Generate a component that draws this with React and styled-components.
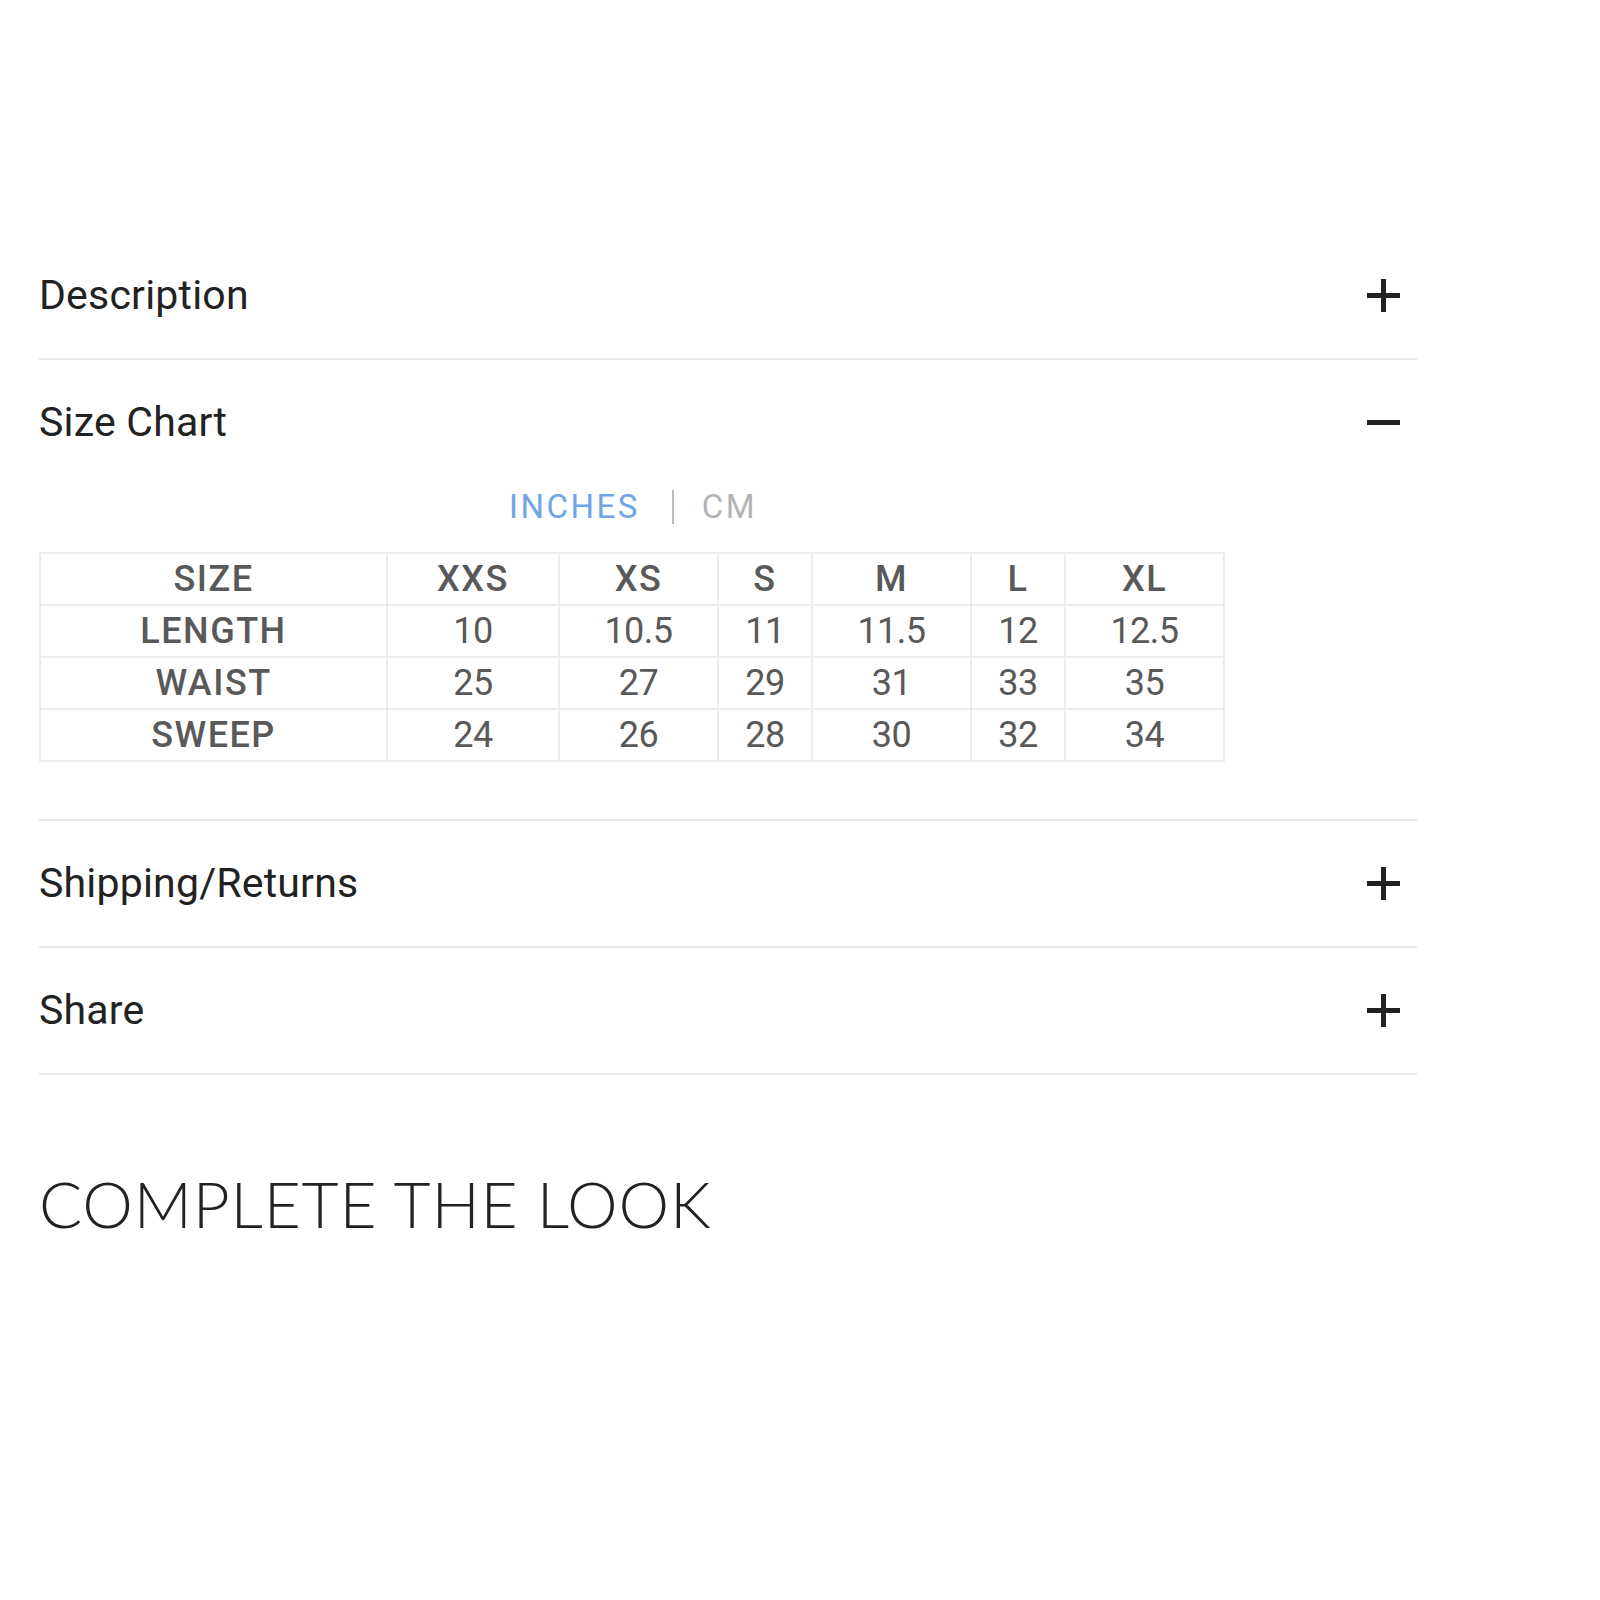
import React, { useState } from "react";
import styled, { createGlobalStyle } from "styled-components";

const Global = createGlobalStyle`
  html, body { margin: 0; padding: 0; background: #ffffff; }
  body { font-family: Roboto, "Liberation Sans", Arial, sans-serif; color: #222; }
`;

const Page = styled.div`
  padding: 233px 0 200px 39px;
`;

const Accordion = styled.div`
  width: 1378px;
`;

const Item = styled.section`
  border-bottom: 2px solid #e7e7e7;
`;

const Header = styled.button`
  all: unset;
  box-sizing: border-box;
  width: 100%;
  height: 125px;
  display: flex;
  align-items: center;
  justify-content: space-between;
  padding-right: 17px;
  cursor: pointer;
`;

const Title = styled.span`
  font-family: Roboto, "Liberation Sans", Arial, sans-serif;
  font-size: 41px;
  line-height: 49px;
  font-weight: 400;
  letter-spacing: 0.2px;
  color: #222;
`;

const Panel = styled.div`
  width: 1184px;
  padding-bottom: 57px;
`;

const Toggle = styled.div`
  display: flex;
  justify-content: center;
  align-items: center;
  height: 44px;
  margin-bottom: 23px;
  padding-left: 4px;
  font-size: 33px;
  line-height: 44px;
  letter-spacing: 2.5px;
`;

const Unit = styled.span`
  color: ${(p) => (p.$active ? "#6fa4e9" : "#b4b4b4")};
  cursor: pointer;
`;

const Sep = styled.span`
  display: inline-block;
  width: 2px;
  height: 34px;
  background: #bdbdbd;
  margin: 0 28px 0 32px;
`;

const Table = styled.table`
  width: 1184px;
  table-layout: fixed;
  border-collapse: collapse;
  border: 2px solid #ededed;
`;

const Cell = styled.td`
  height: 50px;
  padding: 0;
  border: 2px solid #ededed;
  text-align: center;
  vertical-align: middle;
  font-size: 36px;
  line-height: 48px;
  color: #595959;
  font-weight: ${(p) => (p.$bold ? 500 : 400)};
  letter-spacing: ${(p) => (p.$bold ? "1.5px" : "-0.5px")};
`;

const LookTitle = styled.h2`
  margin: 91px 0 0 0;
  font-family: Lato, "Open Sans", sans-serif;
  font-weight: 300;
  font-size: 64px;
  line-height: 1.2;
  color: #222;
  letter-spacing: 0.8px;
`;

const Plus = () => (
  <svg width="33" height="33" viewBox="0 0 33 33" aria-hidden="true">
    <rect x="0" y="14" width="33" height="5" fill="#222" />
    <rect x="14" y="0" width="5" height="33" fill="#222" />
  </svg>
);

const Minus = () => (
  <svg width="33" height="33" viewBox="0 0 33 33" aria-hidden="true">
    <rect x="0" y="14" width="33" height="5" fill="#222" />
  </svg>
);

const sizes = ["XXS", "XS", "S", "M", "L", "XL"];
const rows = [
  ["LENGTH", ["10", "10.5", "11", "11.5", "12", "12.5"]],
  ["WAIST", ["25", "27", "29", "31", "33", "35"]],
  ["SWEEP", ["24", "26", "28", "30", "32", "34"]],
];
const colWidths = [347, 172, 159, 94, 159, 94, 159];

function SizeChart() {
  const [unit, setUnit] = useState("in");
  return (
    <Panel>
      <Toggle>
        <Unit $active={unit === "in"} onClick={() => setUnit("in")}>INCHES</Unit>
        <Sep />
        <Unit $active={unit === "cm"} onClick={() => setUnit("cm")}>CM</Unit>
      </Toggle>
      <Table>
        <colgroup>
          {colWidths.map((w, i) => (
            <col key={i} style={{ width: w }} />
          ))}
        </colgroup>
        <tbody>
          <tr>
            <Cell $bold>SIZE</Cell>
            {sizes.map((s) => (
              <Cell key={s} $bold>{s}</Cell>
            ))}
          </tr>
          {rows.map(([label, vals]) => (
            <tr key={label}>
              <Cell $bold>{label}</Cell>
              {vals.map((v, i) => (
                <Cell key={i}>{v}</Cell>
              ))}
            </tr>
          ))}
        </tbody>
      </Table>
    </Panel>
  );
}

export default function App() {
  const [open, setOpen] = useState("size");
  const items = [
    { id: "desc", title: "Description" },
    { id: "size", title: "Size Chart" },
    { id: "ship", title: "Shipping/Returns" },
    { id: "share", title: "Share" },
  ];
  return (
    <>
      <Global />
      <Page>
        <Accordion>
          {items.map((it) => (
            <Item key={it.id}>
              <Header onClick={() => setOpen(open === it.id ? null : it.id)}>
                <Title>{it.title}</Title>
                {open === it.id ? <Minus /> : <Plus />}
              </Header>
              {open === it.id && it.id === "size" && <SizeChart />}
            </Item>
          ))}
        </Accordion>
        <LookTitle>COMPLETE THE LOOK</LookTitle>
      </Page>
    </>
  );
}
